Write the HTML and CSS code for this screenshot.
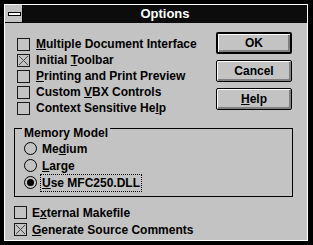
FILE: index.html
```html
<!DOCTYPE html>
<html lang="en">
<head>
    <meta charset="UTF-8">
    <title>Options</title>
    <link rel="stylesheet" href="styles.css">
</head>
<body>
    <div class="window">
        <div class="titlebar">
            <div class="sysmenu"><span class="sysbar"></span></div>
            <div class="title">Options</div>
        </div>
        <div class="content">
            <div class="top">
                <div class="checks">
                    <div class="check"><span class="box"></span><span><u>M</u>ultiple Document Interface</span></div>
                    <div class="check"><span class="box checked"><svg viewBox="0 0 11 11"><path d="M1 1L10 10M10 1L1 10"/></svg></span><span>Initial <u>T</u>oolbar</span></div>
                    <div class="check"><span class="box"></span><span><u>P</u>rinting and Print Preview</span></div>
                    <div class="check"><span class="box"></span><span>Custom <u>V</u>BX Controls</span></div>
                    <div class="check"><span class="box"></span><span>Context Sensitive He<u>l</u>p</span></div>
                </div>
                <div class="buttons">
                    <button type="button" class="btn default">OK</button>
                    <button type="button" class="btn">Cancel</button>
                    <button type="button" class="btn"><u>H</u>elp</button>
                </div>
            </div>
            <div class="group">
                <span class="group-label">Memory Model</span>
                <div class="radio"><span class="circle"></span><span>Me<u>d</u>ium</span></div>
                <div class="radio"><span class="circle"></span><span><u>L</u>arge</span></div>
                <div class="radio"><span class="circle on"></span><span class="focus"><u>U</u>se MFC250.DLL</span></div>
            </div>
            <div class="bottom">
                <div class="check"><span class="box"></span><span>E<u>x</u>ternal Makefile</span></div>
                <div class="check"><span class="box checked"><svg viewBox="0 0 11 11"><path d="M1 1L10 10M10 1L1 10"/></svg></span><span><u>G</u>enerate Source Comments</span></div>
            </div>
        </div>
    </div>
</body>
</html>
```

FILE: styles.css
```css
html, body {
    margin: 0;
    padding: 0;
}
body {
    background-color: #000;
    width: 313px;
    height: 245px;
    overflow: hidden;
    font-family: "Liberation Sans", Arial, sans-serif;
    font-weight: bold;
    font-size: 12px;
    color: #000;
}
.window {
    margin: 4px 0 0 4px;
    width: 302px;
    height: 235px;
    border: 1px solid #fff;
    background-color: #c3c3c3;
}
.titlebar {
    display: flex;
    height: 18px;
    background-color: #0c0c0c;
}
.sysmenu {
    width: 17px;
    height: 17px;
    background-color: #c3c3c3;
    border-right: 1px solid #000;
    position: relative;
}
.sysbar {
    position: absolute;
    left: 3px;
    top: 7px;
    width: 11px;
    height: 2px;
    background-color: #fff;
    border: 1px solid #000;
}
.title {
    flex: 1;
    text-align: center;
    color: #fff;
    font-size: 13px;
    line-height: 18px;
}
.content {
    padding: 9px 14px 0 9px;
}
.top {
    display: flex;
    justify-content: space-between;
}
.checks {
    margin: 4px 0 0 3px;
}
.check, .radio {
    display: flex;
    align-items: center;
    height: 16px;
    white-space: nowrap;
}
.box {
    width: 11px;
    height: 11px;
    border: 1px solid #1a1a1a;
    margin-right: 6px;
    display: flex;
}
.box svg {
    width: 11px;
    height: 11px;
}
.box path {
    stroke: #4a4a4a;
    stroke-width: 1;
    fill: none;
}
.buttons {
    display: flex;
    flex-direction: column;
    gap: 6px;
    margin-right: 1px;
}
.btn {
    width: 76px;
    height: 22px;
    padding: 0;
    background-color: #c3c3c3;
    border: 1px solid #000;
    border-radius: 2px;
    box-shadow: inset 1px 1px #fff, inset -2px -2px #808080;
    font: inherit;
    color: #000;
}
.btn.default {
    border-width: 2px;
}
.group {
    position: relative;
    margin-top: 12px;
    border: 1px solid #000;
    padding: 11px 0 5px 9px;
}
.group-label {
    position: absolute;
    left: 7px;
    top: -2px;
    padding: 0 2px;
    background-color: #c3c3c3;
    line-height: 12px;
}
.radio {
    height: 17px;
}
.circle {
    width: 11px;
    height: 11px;
    border: 1px solid #000;
    border-radius: 50%;
    margin-right: 5px;
    position: relative;
}
.circle.on::after {
    content: "";
    position: absolute;
    left: 2px;
    top: 2px;
    width: 7px;
    height: 7px;
    border-radius: 50%;
    background-color: #000;
}
.focus {
    border: 1px dotted #000;
    padding: 1px 1px;
    margin-left: -2px;
}
.bottom {
    margin-top: 7px;
}
.bottom .check {
    height: 17px;
}
.bottom .box {
    margin-right: 5px;
}
```
